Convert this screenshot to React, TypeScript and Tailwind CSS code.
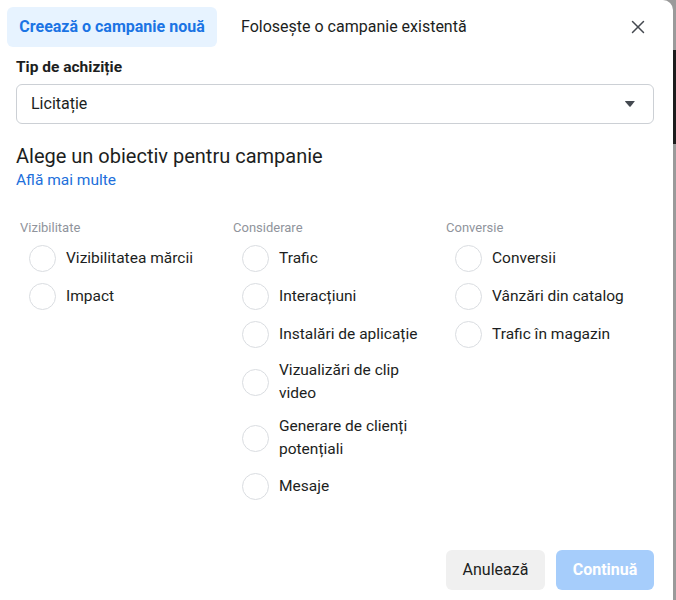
import { X } from 'lucide-react';

type Item = { lines: string[]; gap?: boolean };

const columns: { title: string; items: Item[] }[] = [
  {
    title: 'Vizibilitate',
    items: [{ lines: ['Vizibilitatea mărcii'] }, { lines: ['Impact'] }],
  },
  {
    title: 'Considerare',
    items: [
      { lines: ['Trafic'] },
      { lines: ['Interacțiuni'] },
      { lines: ['Instalări de aplicație'] },
      { lines: ['Vizualizări de clip', 'video'], gap: true },
      { lines: ['Generare de clienți', 'potențiali'] },
      { lines: ['Mesaje'], gap: true },
    ],
  },
  {
    title: 'Conversie',
    items: [{ lines: ['Conversii'] }, { lines: ['Vânzări din catalog'] }, { lines: ['Trafic în magazin'] }],
  },
];

function RadioRow({ item }: { item: Item }) {
  return (
    <div
      className={`flex items-center gap-[10px] pl-[9px] ${item.lines.length === 2 ? 'min-h-[56px]' : 'min-h-[38px]'} ${item.gap ? 'mt-[1px]' : ''}`}
    >
      <span className="w-[27px] h-[27px] shrink-0 rounded-full border border-[#dadde1] bg-white" />
      <span className="flex flex-col text-[15.5px] leading-[23px] text-[#1c1e21] whitespace-nowrap">
        {item.lines.map((l) => (
          <span key={l}>{l}</span>
        ))}
      </span>
    </div>
  );
}

export default function App() {
  return (
    <div
      className="relative w-[676px] h-[600px] bg-[#9a9a9a] overflow-hidden"
      style={{ fontFamily: 'Roboto, "Liberation Sans", Arial, sans-serif' }}
    >
      {/* dark strip peeking behind the modal */}
      <div className="absolute right-0 top-[50px] w-[3px] h-[94px] bg-[#1d1d1d]" />

      <div className="relative w-[673px] h-[600px] bg-white rounded-tr-[10px] flex flex-col">
        {/* Tabs header */}
        <div className="flex items-center pl-[7px] pr-[24px] pt-[7px]">
          <div className="h-[40px] w-[210px] rounded-[6px] bg-[#e7f3ff] flex items-center justify-center">
            <span className="text-[16px] font-bold text-[#1b74e4]">Creează o campanie nouă</span>
          </div>
          <div className="ml-[24px] text-[16px] text-[#1c1e21]">Folosește o campanie existentă</div>
          <button className="ml-auto text-[#444950]">
            <X size={22} strokeWidth={1.6} />
          </button>
        </div>

        {/* Purchase type */}
        <div className="px-[16px] mt-[10px]">
          <div className="text-[15.5px] font-bold text-[#1c1e21] leading-[20px]">Tip de achiziție</div>
          <div className="mt-[7px] h-[40px] w-[638px] rounded-[6px] border border-[#ccd0d5] flex items-center pl-[14px] pr-[18px]">
            <span className="text-[16px] text-[#1c1e21]">Licitație</span>
            <svg className="ml-auto" width="10" height="6" viewBox="0 0 10 6">
              <path d="M0 0.5 Q0 0 0.6 0 H9.4 Q10 0 9.6 0.5 L5.6 5.4 Q5 6 4.4 5.4 Z" fill="#444950" />
            </svg>
          </div>
        </div>

        {/* Objective */}
        <div className="px-[16px] mt-[20px]">
          <div className="text-[20px] leading-[24px] text-[#1c1e21]">Alege un obiectiv pentru campanie</div>
          <div className="text-[15.5px] leading-[20px] text-[#216fdb] mt-[2px]">Află mai multe</div>
        </div>

        <div className="grid grid-cols-[213px_213px_1fr] pl-[20px] mt-[30px]">
          {columns.map((col) => (
            <div key={col.title} className="flex flex-col">
              <div className="text-[13px] leading-[16px] text-[#90949c] mb-[3px]">{col.title}</div>
              {col.items.map((it) => (
                <RadioRow key={it.lines[0]} item={it} />
              ))}
            </div>
          ))}
        </div>

        {/* Footer */}
        <div className="mt-auto flex justify-end gap-[11px] pr-[19px] pb-[10px]">
          <button className="h-[40px] w-[99px] rounded-[6px] bg-[#f0f0f0] text-[16px] text-[#1c1e21]">Anulează</button>
          <button className="h-[40px] w-[98px] rounded-[6px] bg-[#a6cdfb] text-[16px] font-bold text-white">Continuă</button>
        </div>
      </div>
    </div>
  );
}
